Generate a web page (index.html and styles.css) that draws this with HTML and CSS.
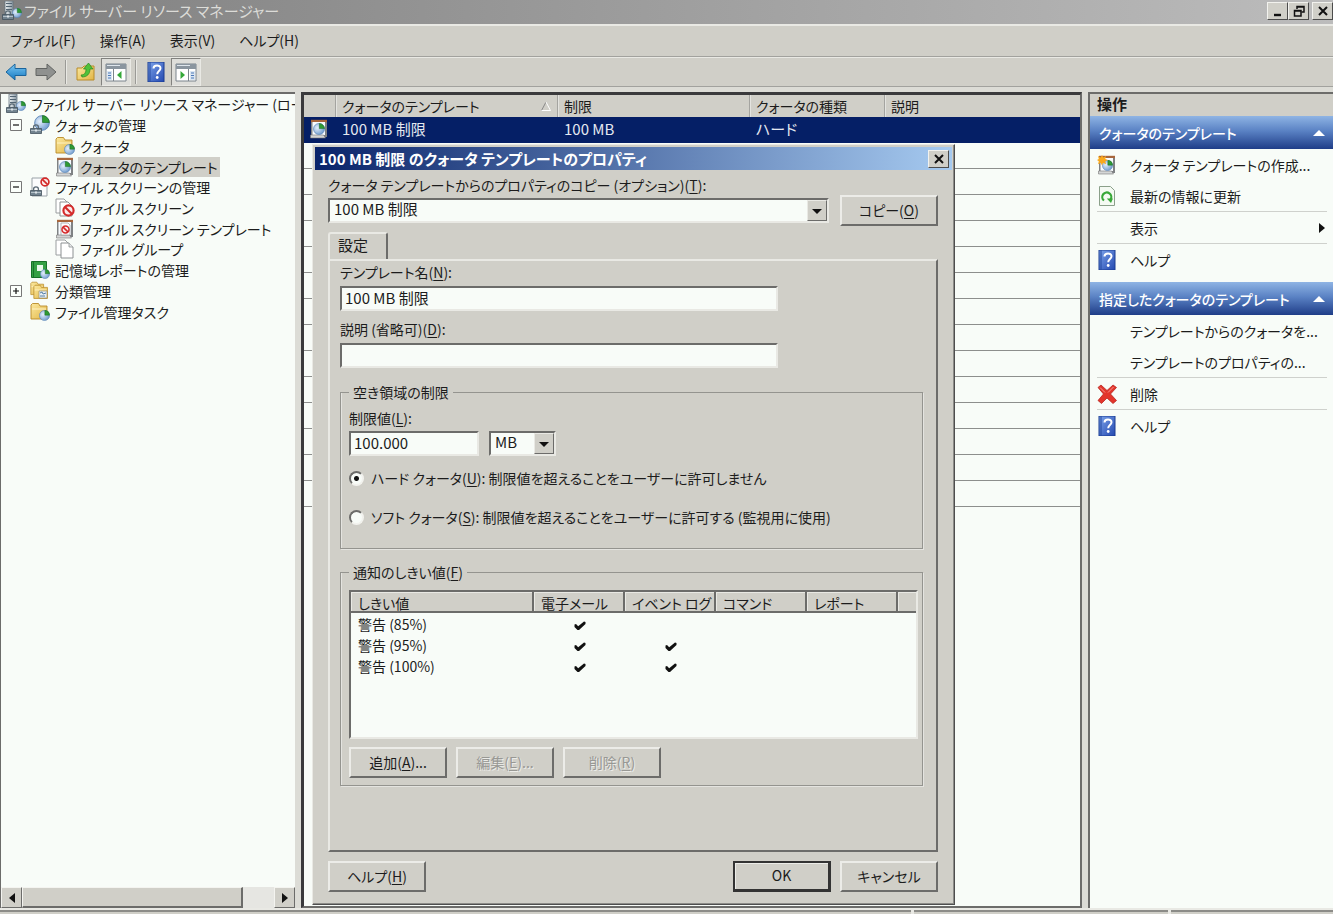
FILE: index.html
```html
<!DOCTYPE html>
<html lang="ja">
<head>
<meta charset="utf-8">
<title>ファイル サーバー リソース マネージャー</title>
<link rel="stylesheet" href="styles.css">
</head>
<body>
<svg class="defs" aria-hidden="true">
  <defs>
    <linearGradient id="gFolder" x1="0" y1="0" x2="1" y2="1"><stop offset="0" stop-color="#fbe9a0"/><stop offset="1" stop-color="#e2b545"/></linearGradient>
    <linearGradient id="gBlue" x1="0" y1="0" x2="1" y2="1"><stop offset="0" stop-color="#7da4ea"/><stop offset="1" stop-color="#2348b0"/></linearGradient>
    <radialGradient id="gPie" cx=".35" cy=".4" r=".7"><stop offset="0" stop-color="#e6f0fc"/><stop offset="1" stop-color="#6a98cc"/></radialGradient>
    <linearGradient id="gArrow" x1="0" y1="0" x2="0" y2="1"><stop offset="0" stop-color="#7cc8f4"/><stop offset="1" stop-color="#1478c0"/></linearGradient>
    <linearGradient id="gServer" x1="0" y1="0" x2="1" y2="0"><stop offset="0" stop-color="#eef2f4"/><stop offset="1" stop-color="#8998a2"/></linearGradient>
  </defs>
  <symbol id="pie" viewBox="0 0 12 12"><circle cx="6" cy="6" r="5.5" fill="url(#gPie)" stroke="#5f88b8" stroke-width=".7"/><path d="M6.4 5.6V.4a5.4 5.4 0 0 1 5.1 5.2z" fill="#2f9a34" stroke="#14681c" stroke-width=".5"/></symbol>
  <symbol id="lock" viewBox="0 0 12 10"><path d="M3.6 4.5V3a2.4 2.2 0 0 1 4.800 0v1.500" fill="none" stroke="#5c6b76" stroke-width="1.300"/><path d="M.5 4.500h11v5H.500z" fill="#72838f" stroke="#43525d" stroke-width=".8"/><path d="M1 6.500h10" stroke="#b4c0c8"/><path d="M5 5.600h2v2H5z" fill="#dde4e8"/></symbol>
  <symbol id="ban" viewBox="0 0 12 12"><circle cx="6" cy="6" r="4.700" fill="#fbeaea" stroke="#d42a2a" stroke-width="2"/><path d="M2.800 2.800l6.400 6.400" stroke="#d42a2a" stroke-width="2"/></symbol>
  <symbol id="folder" viewBox="0 0 20 20"><path d="M1 17V3l1.500-1.500h6L10 4h7v13z" fill="url(#gFolder)" stroke="#b98b28" stroke-width=".9"/><path d="M2 7h14" stroke="#fff3c4"/></symbol>
  <symbol id="frame" viewBox="0 0 20 20"><path d="M2 1h16v17H2z" fill="#7f8284"/><path d="M2 .8h16v2.400H2z" fill="#a8663c"/><path d="M3.500 3h12.500v13H3.500z" fill="#f8fbff"/><path d="M1.500 16h13l2 3H1.500z" fill="#d4d6d6" stroke="#777" stroke-width=".6"/></symbol>
  <symbol id="i-server" viewBox="0 0 20 20"><path d="M3 0h8v17H3z" fill="url(#gServer)" stroke="#65747f" stroke-width=".8"/><path d="M4 2.500h6M4 5.500h6M4 8.500h6" stroke="#536573" stroke-width="1.200"/><use href="#pie" x="10" y="7" width="10" height="10"/><use href="#lock" x="0" y="9" width="12" height="10"/></symbol>
  <symbol id="i-quota" viewBox="0 0 20 20"><use href="#pie" x="4" y="0" width="16" height="16"/><use href="#lock" x="0" y="9" width="12" height="10"/></symbol>
  <symbol id="i-folderpie" viewBox="0 0 20 20"><use href="#folder" width="20" height="20"/><use href="#pie" x="9" y="8" width="11" height="11"/></symbol>
  <symbol id="i-template" viewBox="0 0 20 20"><use href="#frame" width="20" height="20"/><use href="#pie" x="4" y="4" width="12" height="12"/></symbol>
  <symbol id="i-screen" viewBox="0 0 20 20"><path d="M2 1h15v18H2z" fill="#fbfcfd" stroke="#9aa2a8"/><use href="#ban" x="10" y="0" width="10" height="10"/><use href="#lock" x="0" y="9" width="12" height="10"/></symbol>
  <symbol id="i-pages" viewBox="0 0 20 20"><path d="M1 1h9l3 3v12H1z" fill="#fff" stroke="#9a9ea0"/><path d="M6 4h8l4 4v11H6z" fill="#fff" stroke="#8c9092"/><path d="M14 4v4h4" fill="#e8eaea" stroke="#8c9092" stroke-width=".8"/></symbol>
  <symbol id="i-pageban" viewBox="0 0 20 20"><path d="M1 1h8l3 3v11H1z" fill="#fff" stroke="#9a9ea0"/><path d="M5 4h8l4 4v10H5z" fill="#fff" stroke="#8c9092"/><use href="#ban" x="7" y="6" width="13" height="13"/></symbol>
  <symbol id="i-tplban" viewBox="0 0 20 20"><use href="#frame" width="20" height="20"/><path d="M6 4h7l2 2v10H6z" fill="#fff" stroke="#999" stroke-width=".7"/><use href="#ban" x="6" y="6" width="9" height="9"/></symbol>
  <symbol id="i-report" viewBox="0 0 20 20"><path d="M1.500 1.500h15v16h-15z" fill="#35a044" stroke="#187028"/><path d="M3.500 2v15" stroke="#17742a"/><path d="M7 5h6v6H7z" fill="#e9f8ea"/><use href="#pie" x="10" y="9" width="10" height="10"/></symbol>
  <symbol id="i-classify" viewBox="0 0 20 20"><use href="#folder" x="0" y="0" width="16" height="16"/><use href="#folder" x="3" y="3" width="17" height="17"/><path d="M9 10h8v7H9z" fill="#e9eef2" stroke="#8a8670" stroke-width=".6"/><path d="M10 12l2-1 1 2 3-1M10 15h5" stroke="#5580a8" fill="none"/></symbol>
  <symbol id="i-help" viewBox="0 0 20 20"><path d="M2 0h16v20H2z" fill="url(#gBlue)" stroke="#1b3c92"/><path d="M4 0v20" stroke="#24489f"/><path d="M7.500 6.500c0-4 7-4 7-.3 0 2.800-3.300 2.800-3.300 6" fill="none" stroke="#fff" stroke-width="2"/><circle cx="11.200" cy="15.500" r="1.400" fill="#fff"/></symbol>
  <symbol id="i-refresh" viewBox="0 0 20 20"><path d="M2.500.5h11l4 4v15h-15z" fill="#f4faf2" stroke="#8ba08a"/><path d="M7 14.500a4.500 4.500 0 1 1 6.500-1" fill="none" stroke="#38a838" stroke-width="2.200"/><path d="M9.800 12.500h6.200l-2 4.500z" fill="#38a838"/></symbol>
  <symbol id="i-newtpl" viewBox="0 0 20 20"><use href="#frame" width="20" height="20"/><use href="#pie" x="5" y="5" width="11" height="11"/><path d="M5 0l1.300 2.500L9 1 8.300 4 11 5 8.300 6.300 9 9.200 6 7.800 5 10.500 3.700 7.800 1 9.200 1.800 6.300 0 5 1.800 3.900 1 1l2.700 1.500z" fill="#f9a81c"/></symbol>
  <symbol id="i-delete" viewBox="0 0 20 20"><path d="M1 3.500L4 1l6 5.500L16 1l3.500 2.500L13.500 10l6 6.500-3.500 3L10 14l-5.500 5.500L1 16.500 6.500 10z" fill="#e3352b" stroke="#b8261f" stroke-width=".8" stroke-linejoin="round"/><path d="M3 3.500l5 5M16.500 3l-5.500 5.500" stroke="#f79a92"/></symbol>
  <symbol id="i-back" viewBox="0 0 22 20"><path d="M1 10l9-8v4.500h11v7H10V18z" fill="url(#gArrow)" stroke="#1a649c"/></symbol>
  <symbol id="i-forward" viewBox="0 0 22 20"><path d="M21 10l-9-8v4.500H1v7h11V18z" fill="#8f918f" stroke="#626462"/></symbol>
  <symbol id="i-up" viewBox="0 0 20 20"><path d="M1 18V6h5l2-2h10v14z" fill="url(#gFolder)" stroke="#b98b28"/><path d="M5 13c4 0 5-3 5-6H7.500L12.500 1 17 7h-3c0 5-3 8-8 8z" fill="#4fc23a" stroke="#2a8420" stroke-width=".7"/></symbol>
  <symbol id="i-paneleft" viewBox="0 0 22 20"><path d="M1 2h20v17H1z" fill="#fff" stroke="#7b848c"/><path d="M1 2h20v5H1z" fill="#8a959f"/><path d="M2 3.500h13" stroke="#dfe6ec"/><path d="M2 9h5v9H2z" fill="#dbe6f2"/><path d="M3 11h3M3 13.500h3M3 16h3" stroke="#4b78b8"/><path d="M8.500 7v12" stroke="#7b848c"/><path d="M12 13l4.500-4v8z" fill="#35a838"/></symbol>
  <symbol id="i-paneright" viewBox="0 0 22 20"><path d="M1 2h20v17H1z" fill="#fff" stroke="#7b848c"/><path d="M1 2h20v5H1z" fill="#8a959f"/><path d="M2 3.500h13" stroke="#dfe6ec"/><path d="M15 9h5v9h-5z" fill="#dbe6f2"/><path d="M16 11h3M16 13.500h3M16 16h3" stroke="#4b78b8"/><path d="M13.500 7v12" stroke="#7b848c"/><path d="M10 13L5.500 9v8z" fill="#35a838"/></symbol>
  <symbol id="i-x" viewBox="0 0 12 12"><path d="M2 2l8 8M10 2l-8 8" stroke="#111" stroke-width="2"/></symbol>
  <symbol id="i-min" viewBox="0 0 12 12"><path d="M2 10h7" stroke="#111" stroke-width="2.400"/></symbol>
  <symbol id="i-restore" viewBox="0 0 12 12"><path d="M4 4V1.500h7V7H8.500M4 2h7" fill="none" stroke="#111" stroke-width="1.500"/><path d="M1.500 5.500h6.500V11H1.500zM1.500 6H8" fill="none" stroke="#111" stroke-width="1.500"/></symbol>
  <symbol id="i-down" viewBox="0 0 10 10"><path d="M0 3h10L5 8z" fill="#111"/></symbol>
  <symbol id="i-left" viewBox="0 0 10 10"><path d="M8 0v10L2 5z" fill="#111"/></symbol>
  <symbol id="i-right" viewBox="0 0 10 10"><path d="M2 0v10l6-5z" fill="#111"/></symbol>
  <symbol id="i-collapse" viewBox="0 0 12 12"><path d="M0 9h12L6 3z" fill="#fff"/></symbol>
  <symbol id="i-check" viewBox="0 0 12 10"><path d="M.5 3.500L2 3l2.200 2.200L10 .5l1.500.5v2L5 9H3.500L.5 6z" fill="#111"/></symbol>
  <symbol id="i-minus" viewBox="0 0 12 12"><path d="M.5.5h11v11H.5z" fill="#fbfffb" stroke="#777"/><path d="M3 6h6" stroke="#111" stroke-width="1.200"/></symbol>
  <symbol id="i-plus" viewBox="0 0 12 12"><path d="M.5.5h11v11H.5z" fill="#fbfffb" stroke="#777"/><path d="M3 6h6M6 3v6" stroke="#111" stroke-width="1.200"/></symbol>
</svg>

<header class="titlebar">
  <svg class="icon"><use href="#i-server"/></svg>
  <h1>ファイル サーバー リソース マネージャー</h1>
  <div class="winbuttons">
    <button class="winbtn" aria-label="最小化"><svg><use href="#i-min"/></svg></button><button class="winbtn" aria-label="元に戻す"><svg><use href="#i-restore"/></svg></button><button class="winbtn apart" aria-label="閉じる"><svg><use href="#i-x"/></svg></button>
  </div>
</header>
<nav class="menubar">
  <button>ファイル(F)</button><button>操作(A)</button><button>表示(V)</button><button>ヘルプ(H)</button>
</nav>
<div class="toolbar">
  <button class="tool" aria-label="戻る"><svg><use href="#i-back"/></svg></button>
  <button class="tool" aria-label="進む"><svg><use href="#i-forward"/></svg></button>
  <span class="divider"></span>
  <button class="tool" aria-label="上へ"><svg><use href="#i-up"/></svg></button>
  <button class="tool pressed" aria-label="ツリーの表示"><svg><use href="#i-paneleft"/></svg></button>
  <span class="divider"></span>
  <button class="tool" aria-label="ヘルプ"><svg><use href="#i-help"/></svg></button>
  <button class="tool pressed" aria-label="操作ウィンドウの表示"><svg><use href="#i-paneright"/></svg></button>
</div>

<main class="panes">
  <section class="treepane">
    <ul class="tree">
      <li class="l0"><svg class="icon"><use href="#i-server"/></svg><span>ファイル サーバー リソース マネージャー (ロー</span></li>
      <li class="l1"><svg class="expander"><use href="#i-minus"/></svg><svg class="icon"><use href="#i-quota"/></svg><span>クォータの管理</span></li>
      <li class="l2"><svg class="icon"><use href="#i-folderpie"/></svg><span>クォータ</span></li>
      <li class="l2 selected"><svg class="icon"><use href="#i-template"/></svg><span>クォータのテンプレート</span></li>
      <li class="l1"><svg class="expander"><use href="#i-minus"/></svg><svg class="icon"><use href="#i-screen"/></svg><span>ファイル スクリーンの管理</span></li>
      <li class="l2"><svg class="icon"><use href="#i-pageban"/></svg><span>ファイル スクリーン</span></li>
      <li class="l2"><svg class="icon"><use href="#i-tplban"/></svg><span>ファイル スクリーン テンプレート</span></li>
      <li class="l2"><svg class="icon"><use href="#i-pages"/></svg><span>ファイル グループ</span></li>
      <li class="l1 leaf"><svg class="icon"><use href="#i-report"/></svg><span>記憶域レポートの管理</span></li>
      <li class="l1"><svg class="expander"><use href="#i-plus"/></svg><svg class="icon"><use href="#i-classify"/></svg><span>分類管理</span></li>
      <li class="l1 leaf"><svg class="icon"><use href="#i-folderpie"/></svg><span>ファイル管理タスク</span></li>
    </ul>
    <div class="hscroll">
      <button class="sbtn" aria-label="左へ"><svg><use href="#i-left"/></svg></button>
      <span class="thumb"></span><span class="track"></span>
      <button class="sbtn" aria-label="右へ"><svg><use href="#i-right"/></svg></button>
    </div>
  </section>

  <section class="listpane">
    <table class="list">
      <colgroup><col class="c-icon"><col class="c-name"><col class="c-limit"><col class="c-kind"><col></colgroup>
      <thead><tr><th></th><th><span class="sorted">クォータのテンプレート<svg viewBox="0 0 10 10"><path d="M.5 9.500L5 1" stroke="#888" fill="none"/><path d="M5 1l4.500 8.500H.5" stroke="#fff" fill="none"/></svg></span></th><th>制限</th><th>クォータの種類</th><th>説明</th></tr></thead>
      <tbody>
        <tr class="selected"><td><svg class="icon"><use href="#i-template"/></svg></td><td>100 MB 制限</td><td>100 MB</td><td>ハード</td><td></td></tr>
        <tr><td colspan="5"></td></tr><tr><td colspan="5"></td></tr><tr><td colspan="5"></td></tr><tr><td colspan="5"></td></tr><tr><td colspan="5"></td></tr><tr><td colspan="5"></td></tr><tr><td colspan="5"></td></tr>
        <tr><td colspan="5"></td></tr><tr><td colspan="5"></td></tr><tr><td colspan="5"></td></tr><tr><td colspan="5"></td></tr><tr><td colspan="5"></td></tr><tr><td colspan="5"></td></tr><tr><td colspan="5"></td></tr>
      </tbody>
    </table>

    <form class="dialog" role="dialog" aria-labelledby="dlgtitle">
      <div class="dlgbar"><h2 id="dlgtitle">100 MB 制限 のクォータ テンプレートのプロパティ</h2><button type="button" class="winbtn" aria-label="閉じる"><svg><use href="#i-x"/></svg></button></div>
      <div class="dlgbody">
        <label class="lbl" for="copyfrom">クォータ テンプレートからのプロパティのコピー (オプション)(<u>T</u>):</label>
        <div class="copyrow">
          <span class="combo wide"><select id="copyfrom"><option>100 MB 制限</option></select><span class="drop"><svg><use href="#i-down"/></svg></span></span>
          <button type="button" class="btn">コピー(<u>O</u>)</button>
        </div>
        <div class="tabs"><button type="button" class="tab">設定</button></div>
        <div class="page">
          <label class="lbl" for="tname">テンプレート名(<u>N</u>):</label>
          <input class="field" id="tname" type="text" value="100 MB 制限">
          <label class="lbl second" for="tdesc">説明 (省略可)(<u>D</u>):</label>
          <input class="field" id="tdesc" type="text">
          <fieldset class="space">
            <legend>空き領域の制限</legend>
            <label class="lbl" for="limit">制限値(<u>L</u>):</label>
            <div class="limitrow">
              <input class="field short" id="limit" type="text" value="100.000">
              <span class="combo"><select id="unit" aria-label="単位"><option>MB</option></select><span class="drop"><svg><use href="#i-down"/></svg></span></span>
            </div>
            <label class="radio"><input type="radio" name="kind" checked><span>ハード クォータ(<u>U</u>): 制限値を超えることをユーザーに許可しません</span></label>
            <label class="radio"><input type="radio" name="kind"><span>ソフト クォータ(<u>S</u>): 制限値を超えることをユーザーに許可する (監視用に使用)</span></label>
          </fieldset>
          <fieldset class="notify">
            <legend>通知のしきい値(<u>F</u>)</legend>
            <div class="listview">
              <table>
                <colgroup><col class="t-name"><col class="t-col"><col class="t-col"><col class="t-col"><col class="t-col"><col></colgroup>
                <thead><tr><th>しきい値</th><th>電子メール</th><th>イベント ログ</th><th>コマンド</th><th>レポート</th><th></th></tr></thead>
                <tbody>
                  <tr><td>警告 (85%)</td><td><svg><use href="#i-check"/></svg></td><td></td><td></td><td></td><td></td></tr>
                  <tr><td>警告 (95%)</td><td><svg><use href="#i-check"/></svg></td><td><svg><use href="#i-check"/></svg></td><td></td><td></td><td></td></tr>
                  <tr><td>警告 (100%)</td><td><svg><use href="#i-check"/></svg></td><td><svg><use href="#i-check"/></svg></td><td></td><td></td><td></td></tr>
                </tbody>
              </table>
            </div>
            <div class="btnrow">
              <button type="button" class="btn">追加(<u>A</u>)...</button>
              <button type="button" class="btn" disabled>編集(<u>E</u>)...</button>
              <button type="button" class="btn" disabled>削除(<u>R</u>)</button>
            </div>
          </fieldset>
        </div>
        <div class="footer">
          <button type="button" class="btn help">ヘルプ(<u>H</u>)</button>
          <button type="button" class="btn default">OK</button>
          <button type="button" class="btn">キャンセル</button>
        </div>
      </div>
    </form>
  </section>

  <aside class="actions">
    <h2 class="acthead">操作</h2>
    <h3 class="group"><span>クォータのテンプレート</span><svg><use href="#i-collapse"/></svg></h3>
    <ul>
      <li><a href="#"><svg class="icon"><use href="#i-newtpl"/></svg><span>クォータ テンプレートの作成...</span></a></li>
      <li><a href="#"><svg class="icon"><use href="#i-refresh"/></svg><span>最新の情報に更新</span></a></li>
      <li class="sep"><a href="#"><i class="icon"></i><span>表示</span><svg class="more"><use href="#i-right"/></svg></a></li>
      <li class="sep"><a href="#"><svg class="icon"><use href="#i-help"/></svg><span>ヘルプ</span></a></li>
    </ul>
    <h3 class="group"><span>指定したクォータのテンプレート</span><svg><use href="#i-collapse"/></svg></h3>
    <ul>
      <li><a href="#"><i class="icon"></i><span>テンプレートからのクォータを...</span></a></li>
      <li><a href="#"><i class="icon"></i><span>テンプレートのプロパティの...</span></a></li>
      <li class="sep"><a href="#"><svg class="icon"><use href="#i-delete"/></svg><span>削除</span></a></li>
      <li class="sep"><a href="#"><svg class="icon"><use href="#i-help"/></svg><span>ヘルプ</span></a></li>
    </ul>
  </aside>
</main>
<footer class="status"><span class="s1"></span><span></span><span></span></footer>
</body>
</html>
```
FILE: styles.css
```css
:root {
  --face: #d0cfc8;
  --light: #e9e9e4;
  --shadow: #6c6c6a;
  --paper: #f8fcf8;
  --navy: #051f66;
}
* { box-sizing: border-box; }
body {
  margin: 0;
  height: 100vh;
  display: flex;
  flex-direction: column;
  overflow: hidden;
  background: var(--face);
  color: #1c1c1c;
  font: 14px/20px "Noto Sans CJK JP", sans-serif;
  font-feature-settings: "palt";
}
button, input, select { font: inherit; font-feature-settings: inherit; color: inherit; margin: 0; padding: 0; }
h1, h2, h3, ul { margin: 0; padding: 0; font: inherit; list-style: none; }
a { color: inherit; text-decoration: none; }
u { text-underline-offset: 2px; }
.defs { position: absolute; width: 0; height: 0; }
.icon { width: 20px; height: 20px; flex: none; display: block; }

.titlebar {
  flex: none;
  height: 24px;
  display: flex;
  align-items: center;
  gap: 2px;
  padding: 0 0 2px 2px;
  background: linear-gradient(90deg, #808080, #bcbcbc);
  color: #dcdcd8;
}
.titlebar h1 { flex: 1; white-space: nowrap; font-size: 15px; }
.winbuttons { display: flex; }
.winbtn {
  width: 21px;
  height: 18px;
  display: flex;
  align-items: center;
  justify-content: center;
  background: var(--face);
  border: 1px solid;
  border-color: #f2f2ee #4c4c4c #4c4c4c #f2f2ee;
}
.winbtn svg { width: 12px; height: 12px; }
.apart { margin-left: 3px; }

.menubar {
  flex: none;
  height: 33px;
  display: flex;
  align-items: center;
  gap: 24px;
  padding: 0 10px 2px;
  border-top: 2px solid var(--light);
  border-bottom: 1px solid #a2a29e;
}
.menubar button { border: 0; background: none; }
.toolbar {
  flex: none;
  height: 30px;
  display: flex;
  align-items: center;
  padding-left: 1px;
  border-top: 1px solid var(--light);
  border-bottom: 1px solid #a2a29e;
}
.tool { width: 30px; height: 28px; border: 1px solid transparent; background: none; display: flex; align-items: center; justify-content: center; }
.tool svg { width: 22px; height: 20px; }
.pressed { background: #dededa; border-color: #82827f var(--light) var(--light) #82827f; }
.divider { width: 2px; height: 24px; margin: 0 4px; border-left: 1px solid #9a9a96; border-right: 1px solid var(--light); }

.panes {
  flex: 1;
  min-height: 0;
  display: grid;
  grid-template-columns: 295px 1fr 245px;
  gap: 6px;
  padding-top: 5px;
  background: #dcdcd6;
}
.treepane {
  min-width: 0;
  display: flex;
  flex-direction: column;
  background: var(--paper);
  border-top: 2px solid var(--shadow);
  border-left: 1px solid var(--shadow);
}
.tree { flex: none; height: 228px; display: grid; grid-template-rows: repeat(11, 1fr); overflow: hidden; }
.tree li { display: flex; align-items: center; gap: 5px; white-space: nowrap; overflow: hidden; min-height: 0; }
.tree .l0 { padding-left: 5px; }
.tree .l1 { padding-left: 9px; }
.tree .leaf { padding-left: 29px; }
.tree .l2 { padding-left: 54px; }
.expander { width: 12px; height: 12px; flex: none; margin-right: 3px; }
.tree .selected span { background: var(--face); margin-left: -2px; padding: 0 2px; }
.hscroll { margin-top: auto; display: flex; height: 21px; background: #e6e6e2; }
.sbtn, .thumb { border: 1px solid; border-color: #f4f4f0 var(--shadow) var(--shadow) #f4f4f0; background: var(--face); }
.sbtn { width: 21px; display: flex; align-items: center; justify-content: center; }
.sbtn svg { width: 10px; height: 10px; }
.thumb { flex: 220; border-right-width: 2px; border-bottom-width: 2px; }
.track { flex: 31; }

.listpane { position: relative; min-width: 0; background: var(--paper); border: 3px solid #3a3a3c; border-right: 2px solid var(--shadow); border-bottom: 2px solid var(--shadow); }
table { border-collapse: collapse; table-layout: fixed; width: 100%; }
th { font-weight: 400; text-align: left; }
.c-icon { width: 31px; }
.c-name { width: 222px; }
.c-limit { width: 192px; }
.c-kind { width: 135px; }
.list th { height: 22px; padding: 0 0 0 7px; background: var(--face); line-height: 18px; box-shadow: inset 1px 0 #a4a4a0, inset 2px 0 #e4e4e0; }
.list th:first-child { box-shadow: none; }
.sorted { display: flex; align-items: center; justify-content: space-between; padding-right: 6px; }
.sorted svg { width: 10px; height: 10px; }
.list td { height: 26px; padding: 0 0 0 7px; border-bottom: 1px solid #8d8f8d; }
.list .selected td { height: 25px; background: var(--navy); color: #e4e8f0; font-size: 15px; border-bottom: 1px solid var(--navy); }
.list .selected td:first-child { padding-left: 5px; }

.dialog {
  position: absolute;
  top: 49px;
  left: 8px;
  right: 125px;
  bottom: 1px;
  display: flex;
  flex-direction: column;
  padding: 2px;
  background: var(--face);
  border: 1px solid;
  border-color: var(--light) #4e4e4e #4e4e4e var(--light);
  box-shadow: inset -1px -1px #8c8c88;
}
.dlgbar { flex: none; height: 23px; display: flex; align-items: center; justify-content: space-between; padding: 0 3px 0 4px; background: linear-gradient(90deg, #0a246a, #a6caf0); color: #fff; }
.dlgbar h2 { font-weight: 700; font-size: 15px; white-space: nowrap; }
.dlgbody { flex: 1; min-height: 0; display: flex; flex-direction: column; padding: 5px 14px 10px 13px; }
.lbl { display: block; width: fit-content; white-space: nowrap; }
.copyrow { display: flex; align-items: center; gap: 11px; }
.combo { display: flex; height: 25px; width: 67px; background: var(--paper); border: 2px solid; border-color: var(--shadow) var(--light) var(--light) var(--shadow); }
.combo.wide { flex: 1; width: auto; }
select { flex: 1; min-width: 0; appearance: none; border: 0; background: none; padding: 0 0 3px 4px; line-height: 18px; font-size: 15px; }
.drop { width: 20px; background: var(--face); border: 1px solid; border-color: var(--light) var(--shadow) var(--shadow) var(--light); display: flex; align-items: center; justify-content: center; }
.drop svg { width: 10px; height: 10px; }
.btn {
  width: 98px;
  height: 31px;
  padding-bottom: 2px;
  background: var(--face);
  border: 2px solid;
  border-color: #ecece8 var(--shadow) var(--shadow) #ecece8;
  white-space: nowrap;
}
.btn:disabled { color: #989894; text-shadow: 1px 1px #ecece8; }
.default { border: 2px solid #333; border-width: 2px 3px 3px 2px; box-shadow: inset 1px 1px #ecece8; }
.tabs { display: flex; margin-top: 6px; }
.tab { width: 60px; height: 27px; padding: 0 0 4px 8px; text-align: left; font-size: 15px; background: var(--face); border: 2px solid var(--light); border-right-color: var(--shadow); border-bottom: 0; border-radius: 3px 3px 0 0; }
.page { flex: 1; min-height: 0; padding: 1px 13px 0 10px; border: 2px solid; border-color: var(--light) var(--shadow) var(--shadow) var(--light); }
.field { display: block; width: 438px; max-width: 100%; height: 25px; margin-top: 4px; padding: 0 3px 3px; background: var(--paper); border: 2px solid; border-color: var(--shadow) var(--light) var(--light) var(--shadow); border-radius: 0; font-size: 15px; }
.second { margin-top: 8px; }
fieldset { margin: 0; min-width: 0; padding: 0 4px 0 8px; border: 1px solid #94948f; box-shadow: inset 1px 0 #e4e4e0, 1px 1px #e4e4e0; }
legend { padding: 0 4px; }
.space { height: 167px; margin-top: 14px; padding-top: 6px; }
.limitrow { display: flex; gap: 10px; margin: 3px 0 12px; }
.short { width: 130px; margin: 0; }
.radio { display: flex; align-items: center; gap: 7px; margin-bottom: 19px; white-space: nowrap; }
.radio input {
  appearance: none;
  flex: none;
  width: 15px;
  height: 15px;
  border-radius: 50%;
  background: var(--paper);
  border: 2px solid;
  border-color: var(--shadow) #f2f2ee #f2f2ee var(--shadow);
}
.radio input:checked { background: radial-gradient(circle, #111 2px, #f8fcf8 3px); }
.notify { height: 224px; margin-top: 13px; padding-top: 8px; }
.listview { height: 149px; background: var(--paper); border: 2px solid; border-color: var(--shadow) var(--light) var(--light) var(--shadow); }
.t-name { width: 183px; }
.t-col { width: 91px; }
.listview th { height: 21px; padding: 0 0 0 7px; line-height: 18px; white-space: nowrap; background: var(--face); box-shadow: inset -2px -2px var(--shadow), inset 1px 1px var(--light); }
.listview th:last-child { box-shadow: inset 0 -2px var(--shadow), inset 1px 1px var(--light); }
.listview td { height: 21px; padding: 0 0 0 7px; white-space: nowrap; }
.listview td + td { text-align: center; padding: 0; }
.listview td svg { width: 12px; height: 10px; vertical-align: middle; }
.btnrow { display: flex; gap: 9px; margin-top: 8px; }
.footer { display: flex; gap: 9px; margin-top: 9px; }
.help { margin-right: auto; }

.actions { min-width: 0; background: var(--paper); border-top: 2px solid var(--shadow); border-left: 2px solid var(--shadow); }
.acthead { height: 22px; padding-left: 7px; background: var(--face); font-weight: 700; font-size: 15px; }
.group { height: 33px; display: flex; align-items: center; justify-content: space-between; padding: 0 8px 0 9px; background: linear-gradient(#8fb4e4, #5a82c4 45%, #1f3d88); color: #fff; font-weight: 500; white-space: nowrap; }
.group svg { width: 12px; height: 12px; flex: none; }
.actions ul { margin: 0 6px 7px 7px; }
.actions a { height: 31px; display: flex; align-items: center; gap: 13px; white-space: nowrap; }
.sep { border-top: 1px solid #cfd1cd; }
.more { width: 10px; height: 12px; margin-left: auto; }

.status { flex: none; height: 6px; display: flex; gap: 3px; padding-top: 2px; background: var(--light); }
.status span { flex: 162; background: var(--face); border-top: 2px solid #8c8c88; }
.status .s1 { flex: 912; }
.status span:nth-child(2) { flex: 255; }
```
